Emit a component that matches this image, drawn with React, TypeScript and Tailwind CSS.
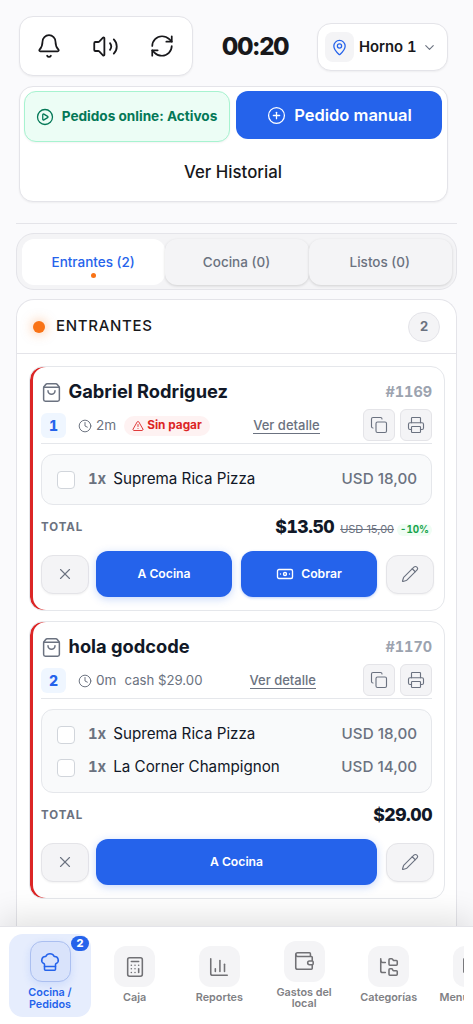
import type { ReactNode } from "react";
import {
  Banknote, Bell, BookOpen, Calculator, ChartColumn, ChefHat, ChevronDown, CirclePlay, CirclePlus, Clock, Copy,
  FolderTree, MapPin, Pencil, Printer, RefreshCw, ShoppingBag, TriangleAlert, Volume2, Wallet, X,
} from "lucide-react";
import type { LucideIcon } from "lucide-react";
import { clsx } from "clsx";

interface OrderItem {
  qty: number;
  name: string;
  price: string;
}

interface Order {
  id: number;
  position: number;
  customer: string;
  elapsed: string;
  payment?: string;
  unpaid?: boolean;
  items: OrderItem[];
  total: string;
  oldTotal?: string;
  discount?: string;
}

const orders: Order[] = [
  {
    id: 1169,
    position: 1,
    customer: "Gabriel Rodriguez",
    elapsed: "2m",
    unpaid: true,
    items: [{ qty: 1, name: "Suprema Rica Pizza", price: "USD 18,00" }],
    total: "$13.50",
    oldTotal: "USD 15,00",
    discount: "-10%",
  },
  {
    id: 1170,
    position: 2,
    customer: "hola godcode",
    elapsed: "0m",
    payment: "cash $29.00",
    items: [
      { qty: 1, name: "Suprema Rica Pizza", price: "USD 18,00" },
      { qty: 1, name: "La Corner Champignon", price: "USD 14,00" },
    ],
    total: "$29.00",
  },
];

const tabs = [
  { label: "Entrantes (2)", active: true },
  { label: "Cocina (0)", active: false },
  { label: "Listos (0)", active: false },
];

const navItems: { label: string; icon: LucideIcon; active?: boolean; badge?: number; labelClass?: string }[] = [
  { label: "Cocina / Pedidos", icon: ChefHat, active: true, badge: 2, labelClass: "w-[60px]" },
  { label: "Caja", icon: Calculator },
  { label: "Reportes", icon: ChartColumn },
  { label: "Gastos del local", icon: Wallet, labelClass: "w-[60px]" },
  { label: "Categorías", icon: FolderTree },
  { label: "Menú", icon: BookOpen, labelClass: "w-[68px] text-left" },
];

function IconButton({ children, className }: { children: ReactNode; className?: string }) {
  return (
    <button
      className={clsx("flex shrink-0 items-center justify-center border border-[#e4e4e8] bg-[#f4f4f6] text-[#6b7280]", className)}
    >
      {children}
    </button>
  );
}

function TopBar() {
  return (
    <header className="flex items-start justify-between pr-[9px] pl-[3px] pt-4">
      <div className="flex h-[60px] w-[174px] items-center justify-between rounded-[14px] border border-[#e4e4e9] bg-white pr-[17px] pl-4 shadow-xs">
        <Bell size={26} strokeWidth={1.6} />
        <Volume2 size={27} strokeWidth={1.6} />
        <RefreshCw size={26} strokeWidth={1.6} />
      </div>
      <div className="flex h-[61px] items-center text-2xl font-extrabold tracking-[-1.4px]">00:20</div>
      <button className="mt-[7px] flex h-12 w-[131px] items-center rounded-[14px] border border-[#e4e4e9] bg-white pl-[7px] shadow-xs">
        <span className="flex h-[30px] w-[29px] items-center justify-center rounded-lg bg-[#f4f4f6]">
          <MapPin size={17} strokeWidth={1.8} className="text-[#2563eb]" />
        </span>
        <span className="ml-[5px] text-[14.8px] font-semibold tabular-nums">Horno 1</span>
        <ChevronDown size={15} strokeWidth={1.8} className="ml-[5px] text-[#6b7280]" />
      </button>
    </header>
  );
}

function ActionsCard() {
  return (
    <section className="mt-[9px] mr-[9px] ml-[3px] h-[116px] rounded-[14px] border border-[#e4e4e9] bg-white py-1 pr-[5px] pl-1 shadow-xs">
      <div className="flex items-start justify-between">
        <button className="flex h-[51px] w-[206px] items-center justify-center gap-2 rounded-xl border border-[#a7f3d0] bg-[#ecfdf5] pr-px text-[13.6px] font-bold text-[#047857] shadow-xs">
          <CirclePlay size={18} strokeWidth={1.7} />
          Pedidos online: Activos
        </button>
        <button className="flex h-12 w-[206px] items-center justify-center gap-2 rounded-xl bg-[#2563eb] pt-px pl-px text-[16.5px] font-semibold text-white">
          <CirclePlus size={19} strokeWidth={1.6} />
          Pedido manual
        </button>
      </div>
      <button className="mt-[18px] block w-full text-center text-[16.8px] leading-6 font-medium">Ver Historial</button>
    </section>
  );
}

function StageTabs() {
  return (
    <div className="mt-[9px] flex h-[57px] rounded-[18px] border border-[#e4e4e9] bg-[#f4f4f6] pt-[5px] pr-1 pl-[5px]">
      {tabs.map((tab) => (
        <button
          key={tab.label}
          className={clsx(
            "flex h-[46px] flex-1 flex-col items-center rounded-[12px] pt-[13px] pr-px text-[13.5px] leading-5 font-medium",
            tab.active ? "bg-white text-[#2563eb]" : "bg-[#f4f4f6] text-[#6b7280] shadow-[0_1px_3px_rgba(0,0,0,0.15)]"
          )}
        >
          {tab.label}
          {tab.active && <span className="mt-[1px] size-[5px] rounded-full bg-[#f97316]" />}
        </button>
      ))}
    </div>
  );
}

function OrderCard({ order }: { order: Order }) {
  return (
    <article className="rounded-[14px] border border-[#e5e7eb] bg-white pt-3 pr-3 pb-[13px] pl-[11px] shadow-[inset_3px_0_0_#dc2626]">
      <div className="flex h-[26px] items-center">
        <ShoppingBag size={21} strokeWidth={1.7} className="text-[#6b7280]" />
        <h3 className="ml-[6.5px] text-[18.3px] font-bold text-[#111827]">{order.customer}</h3>
        <span className="ml-auto text-[14.4px] font-bold text-[#9ca3af] tabular-nums">#{order.id}</span>
      </div>

      {/* Meta row */}
      <div className="mt-[3px] flex h-9 items-center border-b border-[#e5e7eb] text-[13px] text-[#6b7280]">
        <span className="-mt-px flex size-[25px] items-center justify-center rounded-md bg-[#eff6ff] text-[14px] font-extrabold text-[#2563eb] tabular-nums">
          {order.position}
        </span>
        <Clock size={14} strokeWidth={1.7} className="ml-3" />
        <span className="ml-1 text-[13.6px]">{order.elapsed}</span>
        {order.unpaid && (
          <span className="ml-[8px] flex h-5 items-center gap-[3px] rounded-full bg-[#fef2f2] px-2 text-[11.8px] font-bold text-[#dc2626]">
            <TriangleAlert size={12} strokeWidth={1.8} />
            Sin pagar
          </span>
        )}
        {order.payment && <span className="ml-2 text-[13.2px]">{order.payment}</span>}
        <a className="mx-auto border-b border-[#6b7280] leading-[15px] font-medium">Ver detalle</a>
        <div className="-mt-[2px] flex gap-[5px]">
          <IconButton className="size-8 rounded-md">
            <Copy size={18} strokeWidth={1.5} />
          </IconButton>
          <IconButton className="size-8 rounded-md">
            <Printer size={18} strokeWidth={1.5} />
          </IconButton>
        </div>
      </div>

      {/* Items */}
      <ul className="mt-[10px] space-y-[9px] rounded-xl border border-[#e5e7eb] bg-[#f9fafb] pt-3 pr-[14px] pb-[13px] pl-[15px]">
        {order.items.map((item) => (
          <li key={item.name} className="flex h-6 items-center text-[15.2px] text-[#111827]">
            <span className="mt-[2px] size-[18px] rounded-[4px] border border-[#d1d5db] bg-white" />
            <span className="ml-[13px] text-[14.8px] font-bold text-[#6b7280] tabular-nums">{item.qty}x</span>
            <span className="ml-[7px]">{item.name}</span>
            <span className="ml-auto font-medium text-[#6b7280]">{item.price}</span>
          </li>
        ))}
      </ul>

      {/* Total */}
      <div className="mt-2 flex h-[29px] items-center">
        <span className="text-[11.5px] font-bold tracking-[0.95px] text-[#6b7280]">TOTAL</span>
        <span className="ml-auto text-[17.6px] font-extrabold tracking-[-0.5px] text-[#111827] tabular-nums">{order.total}</span>
        {order.oldTotal && <span className="mt-1 ml-[6px] text-[11px] text-[#6b7280] line-through">{order.oldTotal}</span>}
        {order.discount && (
          <span className="mt-[4px] ml-[3px] rounded-full bg-[#f0fdf4] px-[3px] text-[9.8px] leading-3 font-bold text-[#16a34a] tabular-nums">
            {order.discount}
          </span>
        )}
      </div>

      {/* Actions */}
      <div className="mt-[9px] -mr-[2px] flex items-center text-[12.2px] font-semibold text-white">
        <IconButton className="h-[39px] w-12 rounded-xl shadow-xs">
          <X size={18} strokeWidth={1.5} />
        </IconButton>
        <div className="mr-[9px] ml-[7px] flex flex-1 gap-[9px]">
          <button className="h-[46px] flex-1 rounded-xl bg-[#2563eb] shadow-[0_2px_8px_rgba(37,99,235,0.25)]">A Cocina</button>
          {order.unpaid && (
            <button className="flex h-[46px] flex-1 items-center justify-center gap-[7px] rounded-xl bg-[#2563eb] shadow-[0_1px_3px_rgba(37,99,235,0.3)]">
              <Banknote size={18} strokeWidth={1.8} />
              Cobrar
            </button>
          )}
        </div>
        <IconButton className="h-[39px] w-12 rounded-xl shadow-xs">
          <Pencil size={18} strokeWidth={1.5} />
        </IconButton>
      </div>
    </article>
  );
}

function BottomNav() {
  return (
    <nav className="relative h-[98px] shrink-0 border-t border-[#e4e4e9] bg-white px-[9px] pt-[7px] shadow-[0_-8px_32px_rgba(0,0,0,0.12)]">
      <div className="flex gap-[2.7px] overflow-hidden">
        {navItems.map(({ label, icon: Icon, active, badge, labelClass }) => (
          <a
            key={label}
            className={clsx(
              "relative flex h-[83px] w-[82px] shrink-0 flex-col items-center justify-center rounded-[14px] text-center text-[10.8px] leading-[11.5px] font-semibold",
              active ? "bg-[#e6edfd] text-[#2563eb]" : "pb-[1px] text-[#808084]"
            )}
          >
            <span
              className={clsx(
                "mb-[5px] flex size-[41px] items-center justify-center rounded-xl",
                active ? "border border-[#abbff0] bg-[#d9e3fb] shadow-[0_3px_8px_rgba(37,99,235,0.12)]" : "bg-[#f4f4f6] text-[#717175]"
              )}
            >
              <Icon size={22} strokeWidth={1.7} />
            </span>
            <span className={labelClass}>{label}</span>
            {badge && (
              <span className="absolute top-[2px] right-[2px] flex h-[15px] w-[18px] items-center justify-center rounded-full bg-[#2563eb] text-[11px] font-extrabold text-white">
                {badge}
              </span>
            )}
          </a>
        ))}
      </div>
    </nav>
  );
}

export default function App() {
  return (
    <div className="flex h-screen flex-col overflow-hidden bg-[#fafafc] font-['Inter',sans-serif] text-[#18181b]">
      <main className="flex min-h-0 flex-1 flex-col px-4">
        <TopBar />
        <ActionsCard />
        <hr className="mt-[21px] border-[#e4e4e9]" />
        <StageTabs />
        <section className="mt-[9px] min-h-0 flex-1 rounded-t-[18px] border border-b-0 border-[#e4e4e9] bg-white">
          <div className="flex h-[54px] items-center border-b border-[#e4e4e9] px-4">
            <span className="size-3 rounded-full bg-[#f97316] shadow-[0_0_12px_rgba(249,115,22,0.5)]" />
            <h2 className="ml-[11px] text-[15px] font-medium tracking-[0.7px]">ENTRANTES</h2>
            <span className="ml-auto flex h-[30px] w-8 items-center justify-center rounded-full border border-[#e4e4e9] bg-[#f4f4f6] text-[13px] font-bold text-[#6b7280]">
              2
            </span>
          </div>
          <div className="space-y-[10px] pt-3 pr-[11px] pl-3">
            {orders.map((order) => (
              <OrderCard key={order.id} order={order} />
            ))}
          </div>
        </section>
      </main>
      <BottomNav />
    </div>
  );
}
